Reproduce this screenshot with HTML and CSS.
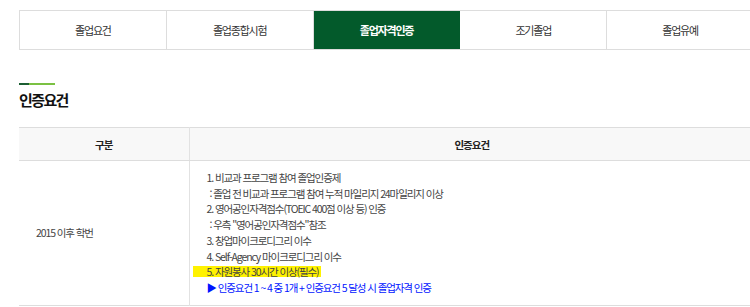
FILE: index.html
```html
<!DOCTYPE html>
<html lang="ko">

<head>
    <meta charset="utf-8">
    <title>졸업자격인증</title>
    <link rel="stylesheet" href="styles.css">
</head>

<body>
    <div class="wrap">
        <ul class="tabs">
            <li><a href="#">졸업요건</a></li>
            <li><a href="#">졸업종합시험</a></li>
            <li class="on"><a href="#">졸업자격인증</a></li>
            <li><a href="#">조기졸업</a></li>
            <li><a href="#">졸업유예</a></li>
        </ul>

        <h3 class="sub-title">인증요건</h3>

        <table class="tbl">
            <colgroup>
                <col class="col-head">
                <col>
            </colgroup>
            <thead>
                <tr>
                    <th>구분</th>
                    <th>인증요건</th>
                </tr>
            </thead>
            <tbody>
                <tr>
                    <td class="label">2015 이후 학번</td>
                    <td class="list">
                        <p>1. 비교과 프로그램 참여 졸업인증제</p>
                        <p class="sub">: 졸업 전 비교과 프로그램 참여 누적 마일리지 24마일리지 이상</p>
                        <p>2. 영어공인자격점수(TOEIC 400점 이상 등) 인증</p>
                        <p class="sub">: 우측 "영어공인자격점수"참조</p>
                        <p>3. 창업마이크로디그리 이수</p>
                        <p>4. Self-Agency 마이크로디그리 이수</p>
                        <p><span class="mark">5. 자원봉사 30시간 이상(필수)</span></p>
                        <p class="note">▶ 인증요건 1 ~ 4 중 1개 + 인증요건 5 달성 시 졸업자격 인증</p>
                    </td>
                </tr>
            </tbody>
        </table>
    </div>
</body>

</html>
```

FILE: styles.css
```css
body {
    margin: 0;
    font-family: "Noto Sans CJK KR", "Noto Sans", sans-serif;
    color: #444;
    background-color: #fff;
    overflow: hidden;
}

.wrap {
    width: 735px;
    padding: 10px 0 0 19px;
}

/* tabs */
.tabs {
    display: flex;
    margin: 0;
    padding: 0;
    list-style: none;
    border-top: 1px solid #ddd;
    border-bottom: 1px solid #ddd;
    border-left: 1px solid #ddd;
}

.tabs li {
    flex: 1;
    border-right: 1px solid #ddd;
}

.tabs a {
    display: block;
    height: 38px;
    line-height: 38px;
    text-align: center;
    font-size: 11px;
    letter-spacing: -1.2px;
    color: #333;
    text-decoration: none;
}

.tabs li.on {
    background-color: #035a2b;
    border-right-color: #035a2b;
}

.tabs li.on a {
    color: #fff;
    font-weight: bold;
}

/* title */
.sub-title {
    position: relative;
    margin: 33px 0 0;
    padding-top: 7px;
    font-size: 15px;
    letter-spacing: -1.6px;
    line-height: 20px;
    color: #111;
}

.sub-title::before {
    content: "";
    position: absolute;
    left: 0;
    top: 0;
    width: 36px;
    height: 2px;
    background: linear-gradient(to right, #1c5e33 0, #1c5e33 10px, #7bc143 10px);
}

/* table */
.tbl {
    width: 100%;
    margin-top: 17px;
    border-collapse: collapse;
    border-top: 1px solid #ddd;
    border-bottom: 1px solid #ddd;
    font-size: 10.5px;
}

.col-head {
    width: 170px;
}

.tbl th {
    height: 32px;
    padding: 0;
    background-color: #f8f8f8;
    border-bottom: 1px solid #ddd;
    font-weight: bold;
    color: #222;
    letter-spacing: -1px;
}

.tbl th + th,
.tbl td + td {
    border-left: 1px solid #e2e2e2;
}

.tbl td {
    padding: 9px 0 9px 17px;
    vertical-align: middle;
    letter-spacing: -1.1px;
}

.tbl td.label {
    color: #444;
}

.list p {
    margin: 0;
    line-height: 15.7px;
}

.list .sub {
    padding-left: 3px;
}

.mark {
    margin-left: -14px;
    padding: 0 2px 0 14px;
    background: linear-gradient(to bottom, transparent 15%, #fff200 15%, #fff200 85%, transparent 85%);
}

.note {
    color: #0014ff;
}
```
